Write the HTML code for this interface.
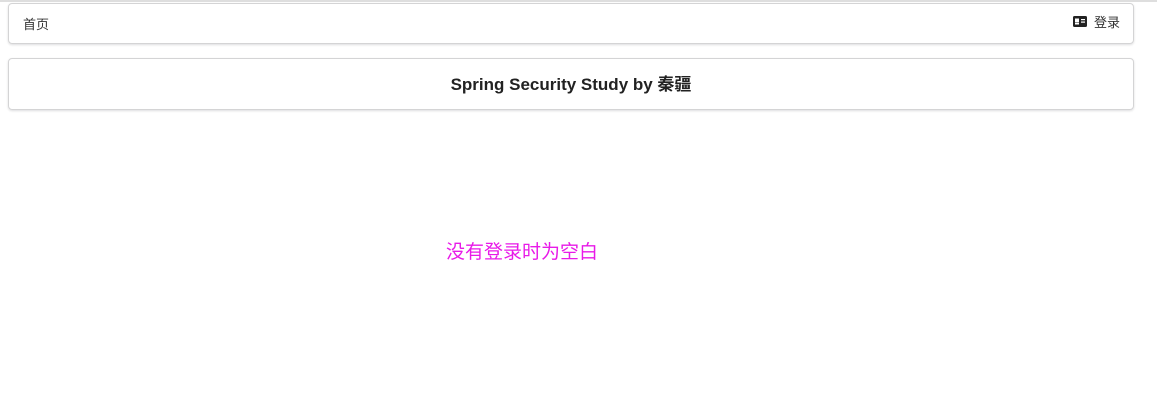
<!DOCTYPE html>
<html><head><meta charset="utf-8"><style>
body{margin:0;width:1157px;height:414px;background:#fff;position:relative;font-family:"Liberation Sans","Noto Sans CJK SC",sans-serif;overflow:hidden}
.topline{position:absolute;left:0;top:0;width:1157px;height:2px;background:#dedede}
.menu{position:absolute;left:8px;top:3px;width:1124px;height:39px;border:1px solid #d4d4d5;border-radius:4px;box-shadow:0 1px 2px rgba(34,36,38,.15)}
.home{position:absolute;left:14px;top:10px;font-size:13px;color:#333}
.login{position:absolute;right:13px;top:8px;font-size:13px;color:#333;display:flex;align-items:center;gap:7px}
.seg{position:absolute;left:8px;top:58px;width:1124px;height:50px;border:1px solid #d4d4d5;border-radius:4px;box-shadow:0 1px 2px rgba(34,36,38,.15);text-align:center;line-height:52px;font-size:17px;font-weight:600;color:#222}
.msg{position:absolute;left:446px;top:237px;font-size:19px;color:#e81ae8}
</style></head><body>
<div class="topline"></div>
<div class="menu">
<div class="home">首页</div>
<div class="login"><svg width="14" height="11" viewBox="0 0 14 11"><rect x="0" y="0" width="14" height="11" rx="1.5" fill="#222"/><rect x="2" y="2.5" width="4" height="4" fill="#fff"/><rect x="2" y="7" width="4" height="1.5" fill="#fff"/><rect x="8" y="3" width="4" height="1.2" fill="#fff"/><rect x="8" y="5.5" width="4" height="1.2" fill="#fff"/></svg><span>登录</span></div>
</div>
<div class="seg">Spring Security Study by 秦疆</div>
<div class="msg">没有登录时为空白</div>
</body></html>
